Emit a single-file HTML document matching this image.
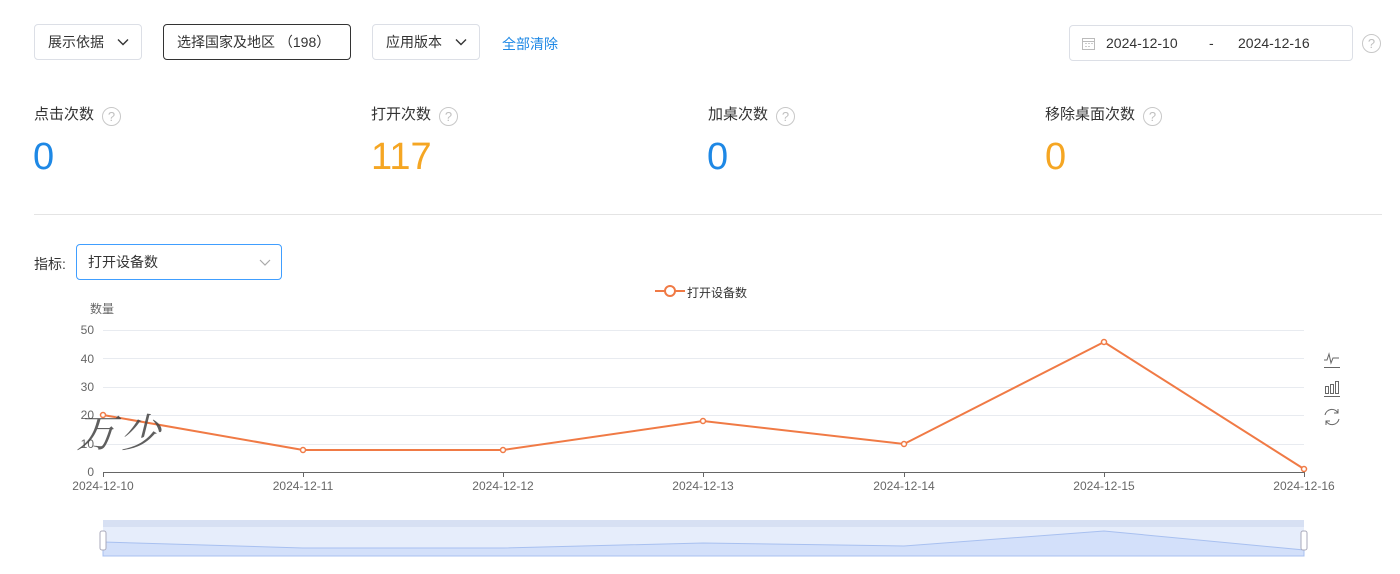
<!DOCTYPE html>
<html><head><meta charset="utf-8"><style>
body{margin:0;width:1400px;height:574px;background:#fff;font-family:"Liberation Sans","Noto Sans CJK SC",sans-serif;color:#333;position:relative;overflow:hidden}
.a{position:absolute}
.btn{position:absolute;top:24px;height:36px;border:1px solid #dcdfe6;border-radius:4px;box-sizing:border-box;font-size:14px;line-height:34px;padding-left:13px;color:#333}
.lbl{position:absolute;top:103px;font-size:15px;color:#333}
.q{display:inline-block;width:17px;height:17px;border:1.5px solid #c8c8c8;border-radius:50%;color:#c0c0c0;font-size:13px;line-height:17px;text-align:center;margin-left:8px;vertical-align:-2px}
.num{position:absolute;top:136px;font-size:38px}
.yl{position:absolute;font-size:12px;color:#666;text-align:right;width:30px;left:64px}
.xl{position:absolute;top:479px;font-size:12px;color:#666;width:80px;text-align:center}
.chev{position:absolute;top:13px}
</style></head><body>
<div class="btn" style="left:34px;width:108px">展示依据 <svg class="chev" style="left:82px" width="12" height="8"><path d="M1 1.5l5 5 5-5" fill="none" stroke="#333" stroke-width="1.4"/></svg></div>
<div class="btn" style="left:163px;width:188px;border-color:#333">选择国家及地区 （198）</div>
<div class="btn" style="left:372px;width:108px">应用版本 <svg class="chev" style="left:82px" width="12" height="8"><path d="M1 1.5l5 5 5-5" fill="none" stroke="#333" stroke-width="1.4"/></svg></div>
<div class="a" style="left:502px;top:34px;font-size:14px;color:#1e88e5">全部清除</div>
<div class="btn" style="left:1069px;width:284px;top:25px;height:36px;padding-left:0">
<svg class="a" style="left:12px;top:11px" width="13" height="13"><rect x="0.5" y="1.5" width="12" height="11" fill="none" stroke="#bbb"/><line x1="1" y1="4.5" x2="12" y2="4.5" stroke="#bbb"/><g fill="#ccc"><rect x="3" y="6" width="2" height="1"/><rect x="6" y="6" width="2" height="1"/><rect x="9" y="6" width="2" height="1"/><rect x="3" y="9" width="2" height="1"/><rect x="6" y="9" width="2" height="1"/></g></svg>
<span class="a" style="left:36px;font-size:14px">2024-12-10</span><span class="a" style="left:139px">-</span><span class="a" style="left:168px;font-size:14px">2024-12-16</span></div>
<div class="a" style="left:1362px;top:33px"><span class="q" style="margin:0">?</span></div>
<div class="lbl" style="left:34px">点击次数<span class="q">?</span></div>
<div class="lbl" style="left:371px">打开次数<span class="q">?</span></div>
<div class="lbl" style="left:708px">加桌次数<span class="q">?</span></div>
<div class="lbl" style="left:1045px">移除桌面次数<span class="q">?</span></div>
<div class="num" style="left:33px;color:#1e88e5">0</div>
<div class="num" style="left:371px;color:#f5a623">117</div>
<div class="num" style="left:707px;color:#1e88e5">0</div>
<div class="num" style="left:1045px;color:#f5a623">0</div>
<div class="a" style="left:34px;top:214px;width:1348px;height:1px;background:#e4e4e4"></div>
<div class="a" style="left:34px;top:254px;font-size:14px">指标:</div>
<div class="a" style="left:76px;top:244px;width:206px;height:36px;border:1px solid #409eff;border-radius:4px;box-sizing:border-box;font-size:14px;line-height:34px;padding-left:11px">打开设备数<svg class="a" style="left:182px;top:14px" width="12" height="7"><path d="M1 1l5 5 5-5" fill="none" stroke="#aaa" stroke-width="1.2"/></svg></div>
<svg class="a" style="left:655px;top:284px" width="30" height="14"><line x1="0" y1="7" x2="30" y2="7" stroke="#f07a45" stroke-width="2"/><circle cx="15" cy="7" r="5" fill="#fff" stroke="#f07a45" stroke-width="2"/></svg>
<div class="a" style="left:687px;top:284px;font-size:12px;color:#333">打开设备数</div>
<div class="a" style="left:90px;top:300px;font-size:12px;color:#666">数量</div>
<div class="yl" style="top:323px">50</div><div class="yl" style="top:352px">40</div><div class="yl" style="top:380px">30</div><div class="yl" style="top:408px">20</div><div class="yl" style="top:437px">10</div><div class="yl" style="top:465px">0</div>
<svg class="a" style="left:0;top:0" width="1400" height="574">
<g stroke="#e8ebf0"><line x1="103" y1="330.5" x2="1304" y2="330.5"/><line x1="103" y1="358.5" x2="1304" y2="358.5"/><line x1="103" y1="387.5" x2="1304" y2="387.5"/><line x1="103" y1="415.5" x2="1304" y2="415.5"/><line x1="103" y1="444.5" x2="1304" y2="444.5"/></g>
<line x1="103" y1="472.5" x2="1304" y2="472.5" stroke="#666"/>
<g stroke="#666"><line x1="103.5" y1="472" x2="103.5" y2="477"/><line x1="303.5" y1="472" x2="303.5" y2="477"/><line x1="503.5" y1="472" x2="503.5" y2="477"/><line x1="703.5" y1="472" x2="703.5" y2="477"/><line x1="904.5" y1="472" x2="904.5" y2="477"/><line x1="1104.5" y1="472" x2="1104.5" y2="477"/><line x1="1304.5" y1="472" x2="1304.5" y2="477"/></g>
<polyline points="103,415 303,450 503,450 703,421 904,444 1104,342 1304,469" fill="none" stroke="#f07a45" stroke-width="2"/>
<g fill="#fff" stroke="#f07a45" stroke-width="1.5"><circle cx="103" cy="415" r="2.5"/><circle cx="303" cy="450" r="2.5"/><circle cx="503" cy="450" r="2.5"/><circle cx="703" cy="421" r="2.5"/><circle cx="904" cy="444" r="2.5"/><circle cx="1104" cy="342" r="2.5"/><circle cx="1304" cy="469" r="2.5"/></g>
<g fill="none" stroke="#666" stroke-width="1"><path d="M1324 360h3l2-6 2 9 2-5h6"/><line x1="1324" y1="367.5" x2="1340" y2="367.5"/>
<rect x="1325.5" y="386.5" width="3" height="7"/><rect x="1330.5" y="384.5" width="3" height="9"/><rect x="1335.5" y="381.5" width="3" height="12"/><line x1="1324" y1="396.5" x2="1340" y2="396.5"/>
<path d="M1325 415a7 7 0 0 1 13-2M1339 419a7 7 0 0 1-13 2"/><path d="M1338 409v4h-4M1326 425v-4h4"/></g>
<rect x="103" y="520" width="1201" height="36" fill="#e6edfb"/>
<rect x="103" y="520" width="1201" height="7" fill="#d7e0f3"/>
<path d="M103 542L303 548 503 548 703 543 904 546 1104 531 1304 550V556H103Z" fill="#d3e0fa" stroke="#a8c0f0"/>
<rect x="100" y="531" width="6" height="19" rx="2" fill="#fff" stroke="#aab"/>
<rect x="1301" y="531" width="6" height="19" rx="2" fill="#fff" stroke="#aab"/>
</svg>
<div class="xl" style="left:63px">2024-12-10</div><div class="xl" style="left:263px">2024-12-11</div><div class="xl" style="left:463px">2024-12-12</div><div class="xl" style="left:663px">2024-12-13</div><div class="xl" style="left:864px">2024-12-14</div><div class="xl" style="left:1064px">2024-12-15</div><div class="xl" style="left:1264px">2024-12-16</div>
<div class="a" style="left:76px;top:402px;font-size:40px;color:#444;font-family:'Noto Serif CJK SC',serif;font-style:italic;letter-spacing:4px;opacity:.85">万少</div>
</body></html>
